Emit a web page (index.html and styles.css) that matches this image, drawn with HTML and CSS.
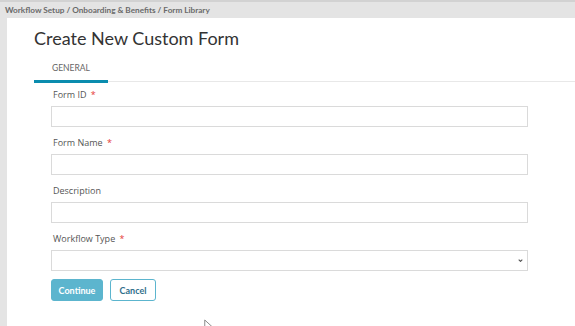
FILE: index.html
```html
<!DOCTYPE html>
<html>
<head>
    <title>Create New Custom Form</title>
    <link rel="stylesheet" href="styles.css">
</head>
<body>
    <div class="breadcrumb">Workflow Setup / Onboarding &amp; Benefits / Form Library</div>

    <div class="page">
        <h1>Create New Custom Form</h1>

        <div class="tabs">
            <div class="tab active">GENERAL</div>
        </div>

        <form class="form">
            <div class="field">
                <label>Form ID <span class="req">*</span></label>
                <input type="text" class="input">
            </div>
            <div class="field">
                <label>Form Name <span class="req">*</span></label>
                <input type="text" class="input">
            </div>
            <div class="field">
                <label>Description</label>
                <input type="text" class="input">
            </div>
            <div class="field last">
                <label>Workflow Type <span class="req">*</span></label>
                <div class="select-wrap">
                    <select class="input select"><option></option></select>
                    <svg class="chevron" viewBox="0 0 8 5">
                        <path d="M1 1l3 3 3-3"/>
                    </svg>
                </div>
            </div>
            <div class="actions">
                <button type="button" class="btn btn-primary">Continue</button>
                <button type="button" class="btn btn-secondary">Cancel</button>
            </div>
        </form>

        <!-- mouse pointer left in the screenshot -->
        <svg class="cursor" viewBox="0 0 12 18">
            <path d="M1 1v15l4-4 3 6 2-1-3-6h5z"/>
        </svg>
    </div>
</body>
</html>
```

FILE: styles.css
```css
* {
    margin: 0;
    padding: 0;
    box-sizing: border-box;
}

html, body {
    height: 100%;
}

body {
    background: #e4e4e4;
    font-family: 'Open Sans', sans-serif;
    color: #555;
    overflow: hidden;
    display: flex;
    flex-direction: column;
}

.breadcrumb {
    border-top: 2px solid #d2d2d2;
    height: 18px;
    padding: 2px 5px 0;
    font-family: Lato, sans-serif;
    font-weight: 700;
    font-size: 8.2px;
    line-height: 12px;
    color: #6a6a6a;
}

.page {
    flex: 1;
    position: relative;
    margin-left: 7px;
    background: white;
    padding: 9px 0 0 27px;
}

h1 {
    font-family: Lato, sans-serif;
    font-weight: 400;
    font-size: 18px;
    line-height: 22px;
    color: #333;
}

.tabs {
    display: flex;
    padding-top: 13px;
    border-bottom: 1px solid #e8e8e8;
}

.tab {
    font-family: Lato, sans-serif;
    font-size: 8.5px;
    line-height: 12px;
    color: #666;
    padding: 0 18px 6px;
    margin-bottom: -2px;
    border-bottom: 3px solid transparent;
}

.tab.active {
    border-bottom-color: #0a8cae;
}

.form {
    padding: 7px 0 0 17px;
    width: 494px;
}

.field {
    margin-bottom: 10px;
}

.field.last {
    margin-bottom: 8px;
}

.field label {
    display: block;
    font-size: 9px;
    line-height: 12px;
    color: #555;
    padding-left: 2px;
    margin-bottom: 5px;
}

.req {
    color: #e53935;
    margin-left: 2px;
}

.input {
    display: block;
    width: 477px;
    height: 21px;
    border: 1px solid #dadada;
    background: white;
    font-family: inherit;
    font-size: 9px;
    outline: none;
}

.select-wrap {
    position: relative;
    width: 477px;
}

.select {
    appearance: none;
    -webkit-appearance: none;
    border-radius: 0;
}

.chevron {
    position: absolute;
    right: 5px;
    top: 9px;
    width: 5px;
    height: 3px;
    fill: none;
    stroke: #555;
    stroke-width: 1.8;
}

.actions {
    display: flex;
    gap: 7px;
}

.btn {
    height: 22px;
    border-radius: 3px;
    font-family: Lato, sans-serif;
    font-weight: 700;
    font-size: 9px;
    cursor: pointer;
}

.btn-primary {
    width: 52px;
    background: #5cb5ce;
    border: 1px solid #5cb5ce;
    color: white;
}

.btn-secondary {
    width: 46px;
    background: white;
    border: 1px solid #5cb5ce;
    color: #2f6f8c;
}

.cursor {
    position: absolute;
    left: 197px;
    top: 301px;
    width: 9px;
    height: 14px;
    fill: white;
    stroke: #666;
    stroke-width: 1;
}
```
